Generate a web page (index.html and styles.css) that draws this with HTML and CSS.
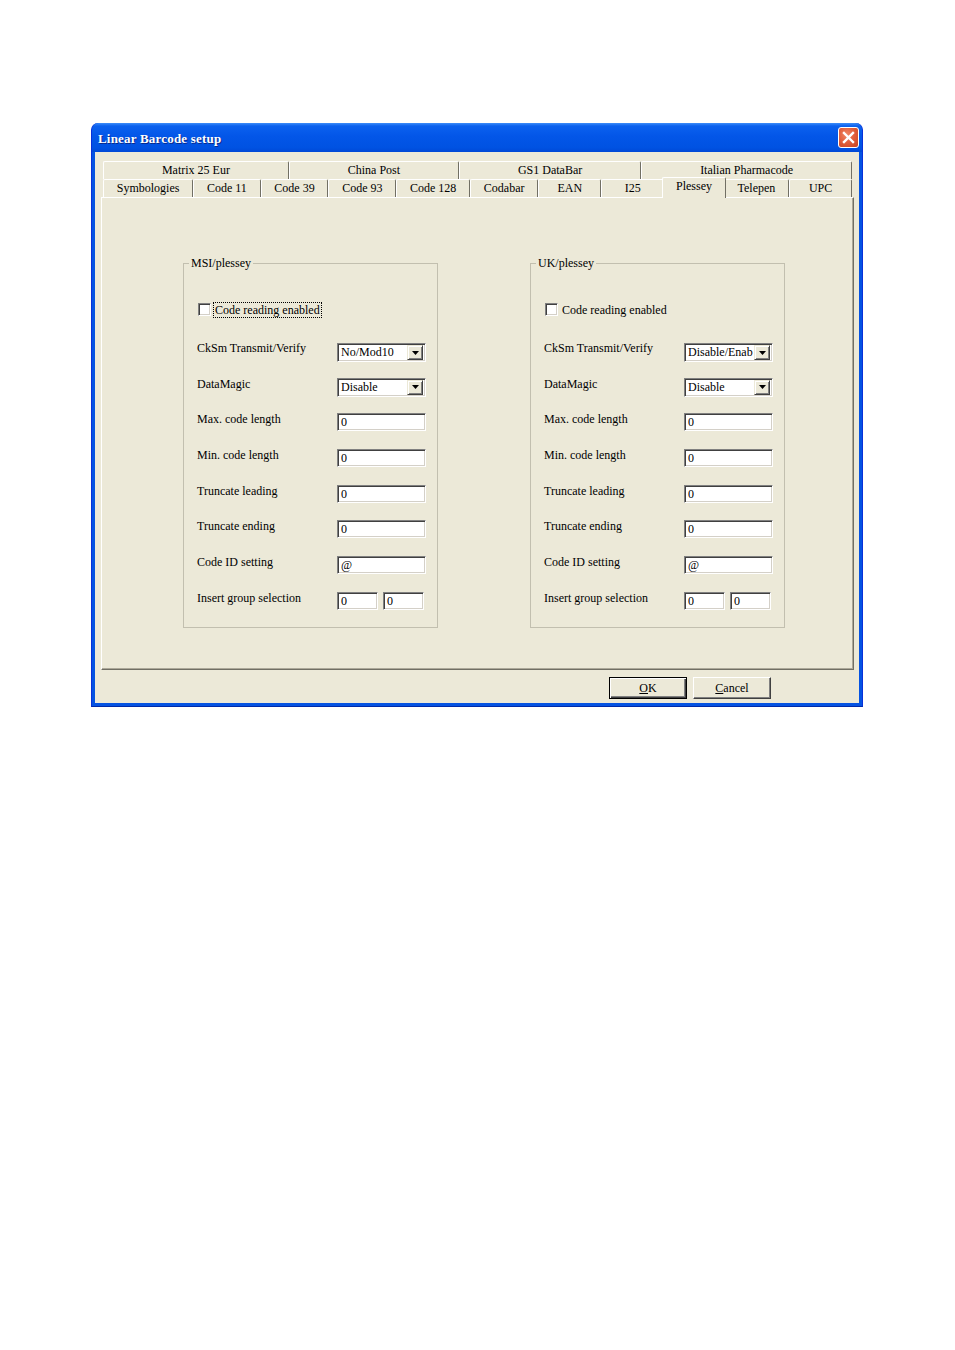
FILE: index.html
```html
<!DOCTYPE html>
<html lang="en">
<head>
  <meta charset="UTF-8" />
  <title>Linear Barcode setup</title>
  <link rel="stylesheet" href="styles.css">
</head>
<body>

  <div class="window">
    <div class="titlebar">
      <span class="title">Linear Barcode setup</span>
      <span class="close">
        <svg width="19" height="19" viewBox="0 0 19 19"><path d="M5 5L14 14M14 5L5 14" stroke="#fff" stroke-width="2.4" stroke-linecap="square"/></svg>
      </span>
    </div>

    <div class="client">
      <!-- TAB STRIP -->
      <div class="tabs">
        <div class="tab-row">
          <div class="tab">Matrix 25 Eur</div>
          <div class="tab">China Post</div>
          <div class="tab">GS1 DataBar</div>
          <div class="tab">Italian Pharmacode</div>
        </div>
        <div class="tab-row">
          <div class="tab">Symbologies</div>
          <div class="tab">Code 11</div>
          <div class="tab">Code 39</div>
          <div class="tab">Code 93</div>
          <div class="tab">Code 128</div>
          <div class="tab">Codabar</div>
          <div class="tab">EAN</div>
          <div class="tab">I25</div>
          <div class="tab selected">Plessey</div>
          <div class="tab">Telepen</div>
          <div class="tab">UPC</div>
        </div>
      </div>

      <div class="panel">
        <fieldset class="group">
          <legend>MSI/plessey</legend>
          <div class="group-body">
            <div class="check-row">
              <span class="checkbox"></span>
              <span class="check-label focus">Code reading enabled</span>
            </div>
            <div class="fields">
              <span class="field-label">CkSm Transmit/Verify</span>
              <div class="select"><span class="select-text">No/Mod10</span><span class="arrow"><svg width="7" height="4" viewBox="0 0 7 4"><path d="M0 0h7l-3.5 4z" fill="#000"/></svg></span></div>
              <span class="field-label">DataMagic</span>
              <div class="select second"><span class="select-text">Disable</span><span class="arrow"><svg width="7" height="4" viewBox="0 0 7 4"><path d="M0 0h7l-3.5 4z" fill="#000"/></svg></span></div>
              <span class="field-label">Max. code length</span>
              <div class="input">0</div>
              <span class="field-label">Min. code length</span>
              <div class="input">0</div>
              <span class="field-label">Truncate leading</span>
              <div class="input">0</div>
              <span class="field-label">Truncate ending</span>
              <div class="input">0</div>
              <span class="field-label">Code ID setting</span>
              <div class="input">@</div>
              <span class="field-label">Insert group selection</span>
              <div class="pair"><div class="input small">0</div><div class="input small">0</div></div>
            </div>
          </div>
        </fieldset>

        <fieldset class="group">
          <legend>UK/plessey</legend>
          <div class="group-body">
            <div class="check-row">
              <span class="checkbox"></span>
              <span class="check-label">Code reading enabled</span>
            </div>
            <div class="fields">
              <span class="field-label">CkSm Transmit/Verify</span>
              <div class="select"><span class="select-text">Disable/Enab</span><span class="arrow"><svg width="7" height="4" viewBox="0 0 7 4"><path d="M0 0h7l-3.5 4z" fill="#000"/></svg></span></div>
              <span class="field-label">DataMagic</span>
              <div class="select second"><span class="select-text">Disable</span><span class="arrow"><svg width="7" height="4" viewBox="0 0 7 4"><path d="M0 0h7l-3.5 4z" fill="#000"/></svg></span></div>
              <span class="field-label">Max. code length</span>
              <div class="input">0</div>
              <span class="field-label">Min. code length</span>
              <div class="input">0</div>
              <span class="field-label">Truncate leading</span>
              <div class="input">0</div>
              <span class="field-label">Truncate ending</span>
              <div class="input">0</div>
              <span class="field-label">Code ID setting</span>
              <div class="input">@</div>
              <span class="field-label">Insert group selection</span>
              <div class="pair"><div class="input small">0</div><div class="input small">0</div></div>
            </div>
          </div>
        </fieldset>
      </div>

      <div class="footer">
        <button class="btn default"><u>O</u>K</button>
        <button class="btn"><u>C</u>ancel</button>
      </div>
    </div>
  </div>

</body>
</html>
```

FILE: styles.css
```css
body {
  margin: 0;
  background-color: #ffffff;
  font-family: "Liberation Serif", "Times New Roman", serif;
  font-size: 12px;
  color: #000;
}

.window {
  width: 772px;
  height: 584px;
  margin: 123px 0 0 91px;
  box-sizing: border-box;
  display: flex;
  flex-direction: column;
  background-color: #0553E2;
  border: 1px solid #0831D9;
  border-top: none;
  border-bottom-color: #0029A8;
  border-radius: 7px 7px 0 0;
}

.titlebar {
  height: 29px;
  display: flex;
  align-items: center;
  justify-content: space-between;
  padding: 0 3px 0 6px;
  background: linear-gradient(#3D8DF9 0, #0B61EE 3px, #0356E8 45%, #0052E2 85%, #0048D6 100%);
  border-radius: 7px 7px 0 0;
}

.title {
  color: #ffffff;
  font-weight: bold;
  font-size: 13px;
  letter-spacing: 0.2px;
  text-shadow: 1px 1px #0A2A8A;
  padding-top: 3px;
}

.close {
  width: 21px;
  height: 21px;
  box-sizing: border-box;
  border: 1px solid #ffffff;
  border-radius: 3px;
  background: radial-gradient(circle at 40% 35%, #F08A68 0, #E2603D 45%, #C8421F 100%);
  display: flex;
  align-items: center;
  justify-content: center;
}

.close svg {
  display: block;
}

.client {
  flex: 1;
  margin: 0 3px 3px;
  background-color: #ECE9D8;
  display: flex;
  flex-direction: column;
}

/* tab strip */
.tabs {
  margin: 9px 5px 0 6px;
  padding: 0 2px;
}

.tab-row {
  display: flex;
  height: 18px;
}

.tab {
  flex: 1 1 auto;
  min-width: 63px;
  padding: 0 9px;
  box-sizing: border-box;
  height: 18px;
  text-align: center;
  line-height: 17px;
  white-space: nowrap;
  border-top: 1px solid #ffffff;
  border-left: 1px solid #ffffff;
  border-right: 1px solid #716F64;
  border-radius: 2px 2px 0 0;
  background-color: #ECE9D8;
}

.tab.selected {
  position: relative;
  z-index: 1;
  height: 21px;
  margin: -2px -2px 0;
  line-height: 16px;
}

.panel {
  height: 473px;
  margin: 0 5px 0 6px;
  box-sizing: border-box;
  border: 1px solid;
  border-color: #ffffff #716F64 #716F64 #ffffff;
  box-shadow: inset -1px -1px #ACA899;
  display: flex;
  gap: 92px;
  padding: 58px 0 0 81px;
}

/* group boxes */
.group {
  width: 255px;
  height: 372px;
  margin: 0;
  padding: 0;
  box-sizing: border-box;
  border: 1px solid #C2BFAF;
}

.group legend {
  margin-left: 5px;
  padding: 0 2px;
  line-height: 14px;
}

.group-body {
  padding-left: 13px;
}

.check-row {
  display: flex;
  align-items: center;
  height: 13px;
  margin: 33px 0 25px 1px;
}

.checkbox {
  width: 13px;
  height: 13px;
  box-sizing: border-box;
  background-color: #ffffff;
  border: 1px solid;
  border-color: #808080 #ffffff #ffffff #808080;
  box-shadow: inset 1px 1px #404040, inset -1px -1px #D4D0C8;
}

.check-label {
  margin-left: 3px;
  padding: 0 1px;
  line-height: 14px;
}

.focus {
  outline: 1px dotted #000;
}

.fields {
  display: grid;
  grid-template-columns: 140px 89px;
  grid-auto-rows: 35.7px;
  align-items: start;
}

.field-label {
  line-height: 14px;
}

.input,
.select {
  box-sizing: border-box;
  background-color: #ffffff;
  border: 1px solid;
  border-color: #808080 #ffffff #ffffff #808080;
  box-shadow: inset 1px 1px #404040, inset -1px -1px #D4D0C8;
}

.input {
  height: 18px;
  margin-top: 1px;
  padding-left: 3px;
  line-height: 16px;
}

.input.small {
  width: 41px;
}

.pair {
  display: flex;
  gap: 5px;
}

.select {
  height: 19px;
  margin-top: 2px;
  display: flex;
  align-items: center;
  justify-content: space-between;
  padding: 0 2px 0 3px;
}

.select.second {
  margin-top: 1px;
}

.select-text {
  white-space: nowrap;
}

.arrow {
  flex: none;
  width: 16px;
  height: 15px;
  box-sizing: border-box;
  background-color: #ECE9D8;
  border: 1px solid;
  border-color: #ECE9D8 #404040 #404040 #ECE9D8;
  box-shadow: inset 1px 1px #ffffff, inset -1px -1px #808080;
  display: flex;
  align-items: center;
  justify-content: center;
}

.arrow svg {
  display: block;
}

/* ok / cancel */
.footer {
  display: flex;
  justify-content: flex-end;
  gap: 6px;
  padding: 7px 88px 0 0;
}

.btn {
  width: 78px;
  height: 22px;
  box-sizing: border-box;
  padding: 0;
  font-family: inherit;
  font-size: 12px;
  background-color: #ECE9D8;
  border: 1px solid;
  border-color: #ffffff #404040 #404040 #ffffff;
  box-shadow: inset -1px -1px #808080;
}

.btn.default {
  border: 1px solid #000;
  box-shadow: inset 1px 1px #ffffff, inset -1px -1px #404040, inset -2px -2px #808080;
}
```
